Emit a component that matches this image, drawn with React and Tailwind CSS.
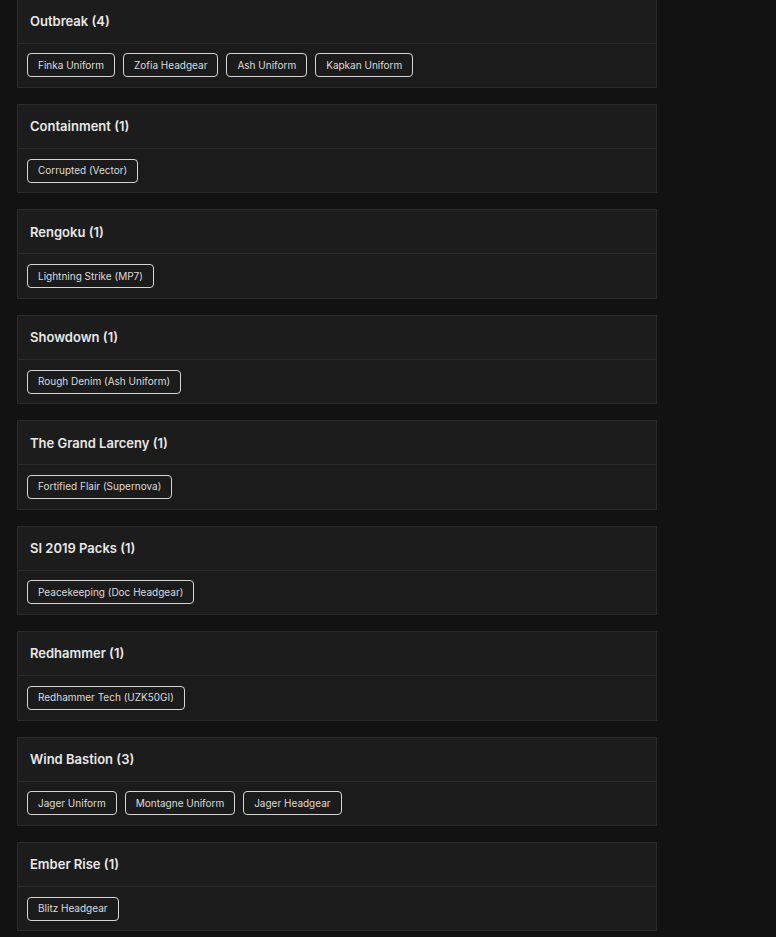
import React from 'react';

const sets = [
  { name: 'Outbreak', items: ['Finka Uniform', 'Zofia Headgear', 'Ash Uniform', 'Kapkan Uniform'] },
  { name: 'Containment', items: ['Corrupted (Vector)'] },
  { name: 'Rengoku', items: ['Lightning Strike (MP7)'] },
  { name: 'Showdown', items: ['Rough Denim (Ash Uniform)'] },
  { name: 'The Grand Larceny', items: ['Fortified Flair (Supernova)'] },
  { name: 'SI 2019 Packs', items: ['Peacekeeping (Doc Headgear)'] },
  { name: 'Redhammer', items: ['Redhammer Tech (UZK50GI)'] },
  { name: 'Wind Bastion', items: ['Jager Uniform', 'Montagne Uniform', 'Jager Headgear'] },
  { name: 'Ember Rise', items: ['Blitz Headgear'] },
];

const App = () => {
  return (
    <div className="min-h-screen bg-[#121212] overflow-hidden" style={{ fontFamily: 'Inter, "Noto Sans", sans-serif' }}>
      <div className="ml-[17px] w-[640px] mt-[-1.43px] flex flex-col gap-4">
        {sets.map((set) => (
          <div key={set.name} className="border border-[#2a2a2a] bg-[#1b1b1b] shadow-[4px_0_4px_rgba(255,255,255,0.015)]">
            {/* Set header */}
            <div className="h-[44px] pl-3 pt-[1px] flex items-center border-b border-[#2a2a2a] bg-[#1c1c1c]">
              <h3 className="text-[13px] font-semibold text-[#e8e8e8]">
                {set.name} ({set.items.length})
              </h3>
            </div>
            {/* Items */}
            <div className="h-[43.43px] px-[9px] flex items-center gap-2">
              {set.items.map((item) => (
                <span
                  key={item}
                  className="h-[24px] px-[10px] flex items-center rounded border border-[#d6d6d6] text-[10px] text-[#dcdcdc]"
                >
                  {item}
                </span>
              ))}
            </div>
          </div>
        ))}
      </div>
    </div>
  );
};

export default App;
